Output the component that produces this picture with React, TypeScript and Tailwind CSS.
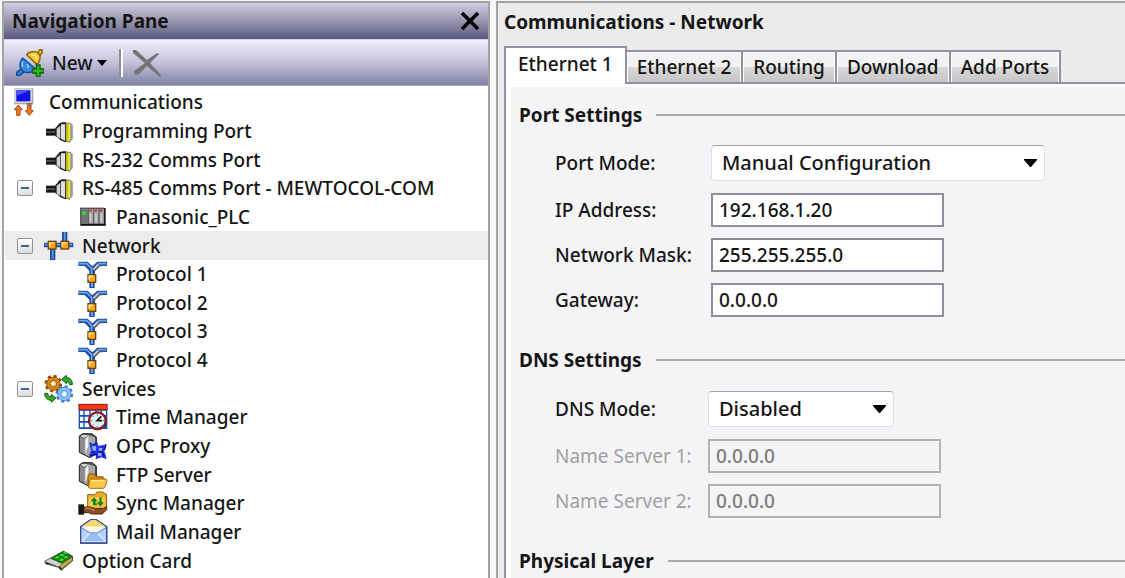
import React from 'react';

type IconProps = { children: React.ReactNode };

/* Tree icons share one 30x28 box, drawn at three units per pixel. */
function TreeIcon({ children }: IconProps) {
  return (
    <svg viewBox="0 0 90 84" className="h-7 w-[30px] shrink-0" aria-hidden="true">
      {children}
    </svg>
  );
}

function CommunicationsIcon() {
  return (
    <svg viewBox="0 0 66 84" className="h-7 w-[22px] shrink-0" aria-hidden="true">
      <rect x="3" y="1" width="58" height="48" fill="#a9a9a9" />
      <rect x="3" y="1" width="54" height="44" fill="#d2d2ce" />
      <rect x="10" y="7" width="42" height="33" fill="#1212e8" />
      <path d="M10 7h42L10 24z" fill="#4a52f8" />
      <path d="M40 45h18v5H40z" fill="#777" />
      <path d="M16 51 28 65h-7v17H11V65H4z" fill="#f47b20" stroke="#a9480b" strokeWidth="3" />
      <path d="M49 82 37 68h7V51h10v17h7z" fill="#f47b20" stroke="#a9480b" strokeWidth="3" />
    </svg>
  );
}

function PortIcon() {
  return (
    <TreeIcon>
      <rect x="6" y="35" width="30" height="21" fill="#161616" />
      <path d="M6 45h28" stroke="#666" strokeWidth="4" />
      <path d="M34 33 40 27 46 19 56 16h10l4 3v54l-6 3-16-7-8-8-6-3z" fill="#1e1e1e" />
      <path d="M38 35 49 26v40l-11-8z" fill="#d9d0d0" />
      <path d="M51 22h12v49l-12-6z" fill="#e6dede" />
      <path d="M65 17h14l7 8v41l-10 12-11-7z" fill="#8b8b80" />
      <path d="M67 21h7v51h-7z" fill="#c9c900" />
      <path d="M73 21h6v50h-6z" fill="#f3ef3a" />
      <path d="M80 23h5v44h-5z" fill="#9b9ba5" />
    </TreeIcon>
  );
}

function PlcIcon() {
  return (
    <TreeIcon>
      <rect x="7" y="15" width="76" height="53" fill="#1b1b1b" />
      <rect x="7" y="14" width="71" height="50" fill="#888" />
      <path d="M7 16h71M9 15v48" stroke="#555" strokeWidth="4" />
      <rect x="11" y="20" width="18" height="40" fill="#747474" />
      <rect x="13" y="26" width="10" height="10" fill="#23f02b" />
      {[32, 48, 64].map((x) => (
        <g key={x}>
          <rect x={x} y="18" width="12" height="44" fill="#aaa" />
          <path d={`M${x + 6} 32v24`} stroke="#ccc" strokeWidth="5" />
          <path d={`M${x - 1} 17v46`} stroke="#5c5c5c" strokeWidth="3" />
          <rect x={x + 2} y="19" width="7" height="7" fill="#d62f2f" />
        </g>
      ))}
      <path d="M8 65h75" stroke="#111" strokeWidth="5" />
    </TreeIcon>
  );
}

function Joint({ x, y }: { x: number; y: number }) {
  return (
    <g>
      <rect x={x + 2} y={y + 2} width="23" height="23" fill="#f7a81c" stroke="#70400a" strokeWidth="4" />
      <path d={`M${x + 6} ${y + 18}V${y + 7}h11`} stroke="#ffe28b" strokeWidth="5" fill="none" />
    </g>
  );
}

function NetworkIcon() {
  return (
    <TreeIcon>
      <path d="M54 0h16v32H54zM0 32h88v14H0zM18 46h16v38H18z" fill="#1b4da6" />
      <path d="M62 0v38M3 38h82M26 48v33" stroke="#5d99e4" strokeWidth="5" />
      <Joint x={11} y={26} />
      <Joint x={49} y={26} />
    </TreeIcon>
  );
}

function ProtocolIcon() {
  return (
    <TreeIcon>
      <path d="M1 5h28l14 14L58 5h29v13H66L51 33v13H34V32L20 18H1z" fill="#1c4ea8" />
      <path d="M43 30 60 14h17l-4 5h-8L50 33z" fill="#565656" />
      <path d="M3 11h23l15 15v17M60 11h25" stroke="#6ba5ec" strokeWidth="5" fill="none" />
      <path d="M46 28 61 13" stroke="#c8c8c8" strokeWidth="6" />
      <rect x="34" y="67" width="16" height="17" fill="#1c4ea8" />
      <path d="M42 69v12" stroke="#6aa5ee" strokeWidth="6" />
      <Joint x={28} y={42} />
    </TreeIcon>
  );
}

function ServicesIcon() {
  return (
    <TreeIcon>
      <circle cx="28" cy="26" r="22" fill="none" stroke="#8b4d08" strokeWidth="9" strokeDasharray="9 8.3" />
      <circle cx="28" cy="26" r="20" fill="#d98714" stroke="#925207" strokeWidth="3" />
      <circle cx="28" cy="26" r="10" fill="#f7c677" stroke="#a15c0a" strokeWidth="3" />
      <circle cx="28" cy="26" r="5" fill="#fff" />
      <circle cx="61" cy="57" r="22" fill="none" stroke="#3a7ed2" strokeWidth="9" strokeDasharray="9 8.3" />
      <circle cx="61" cy="57" r="20" fill="#8fc6ff" stroke="#3f86d8" strokeWidth="3" />
      <circle cx="61" cy="57" r="11" fill="#b9dcff" stroke="#5191d8" strokeWidth="3" />
      <circle cx="61" cy="57" r="5" fill="#fff" />
      <path d="M53 13 67 1v7c12 0 18 7 18 21h-9c0-6-3-9-9-9v6z" fill="#35a525" stroke="#11600d" strokeWidth="3" />
      <path d="M36 69 22 82v-6C9 76 2 68 2 55h9c0 7 4 10 11 10v-7z" fill="#35a525" stroke="#11600d" strokeWidth="3" />
    </TreeIcon>
  );
}

function TimeIcon() {
  return (
    <TreeIcon>
      <rect x="2" y="3" width="86" height="75" fill="#174db7" />
      <path d="M6 23h10v13H6zM20 23h14v13H20zM38 23h14v13H38zM56 23h12v13H56zM72 23h12v13H72zM6 41h10v13H6zM20 41h14v13H20zM6 59h10v14H6zM20 59h14v14H20z" fill="#f4f8ff" />
      <rect x="3" y="4" width="84" height="16" fill="#f13b1b" stroke="#a31c0b" strokeWidth="3" />
      <circle cx="58" cy="53" r="25" fill="#def1f4" stroke="#8e1719" strokeWidth="7" />
      <path d="M58 34v4M58 69v4M38 53h5M74 53h5M44 39l3 3M72 67l3 3M44 67l3-3" stroke="#477c85" strokeWidth="3" />
      <path d="M70 40 57 53h15" stroke="#111" strokeWidth="5" fill="none" />
    </TreeIcon>
  );
}

function ServerShape() {
  return (
    <g>
      <path d="M4 12 14 5h28l13 10v51L35 77 4 61z" fill="#555" stroke="#252525" strokeWidth="3" strokeLinejoin="round" />
      <path d="M6 14 19 20v46L6 59z" fill="#8b8b8b" />
      <path d="M19 22 29 9l22 7v47L34 74l-15-7z" fill="#a9a9a9" />
      <path d="M12 9h17l-9 9-12-5z" fill="#d8d8d8" />
      <path d="M22 24 31 12v30L22 64z" fill="#f2f2f2" />
    </g>
  );
}

function OpcIcon() {
  return (
    <TreeIcon>
      <ServerShape />
      <path d="M34 31l12 6 11-8 3 12 14 0 12-6-3 15-5 9 8 22-15-6-18 7 1-12-20 4 6-16z" fill="#0d1590" />
      <path d="M42 42h13v14H42zM61 47h12v9H61zM58 63h13v10H58z" fill="#8fb0ff" />
      <path d="M38 36l8 5 11-4-1 16 7 5-13 3-14 6 6-13zM62 44l17-3-5 15 6 8 2 14-12-5-13 3 2-13z" stroke="#2a35ff" strokeWidth="4" fill="none" />
    </TreeIcon>
  );
}

function FtpIcon() {
  return (
    <TreeIcon>
      <ServerShape />
      <path d="M30 44q0-5 5-5h14l6 8h18q5 0 5 6v26H36q-6 0-6-6z" fill="#d98f0c" stroke="#8f5905" strokeWidth="3" />
      <path d="M38 54h43q6 0 6 6l-5 16q-2 6-7 6H37q-6 0-5-7l3-16q1-5 3-5z" fill="#fbc748" stroke="#a96b0a" strokeWidth="3" />
      <path d="M39 59h40" stroke="#fff0a8" strokeWidth="3" />
    </TreeIcon>
  );
}

function SyncIcon() {
  return (
    <TreeIcon>
      <path d="M29 17h22l6-8h19l5 6h4l1 11v25L75 62H29z" fill="#e9ac28" stroke="#965f0c" strokeWidth="3" />
      <path d="M32 24h50v30H32z" fill="#fbc850" />
      <path d="M48 25 38 37h7v12h12v-6h-4v-6h6zM64 25h7v15h7L67 53 56 40h8z" fill="#16871d" />
      <path d="M1 46h17v31H1z" fill="#161616" />
      <path d="M18 54h20l14 5h24l10-7v10l-13 13H41l-9-4H18z" fill="#8e4d2a" stroke="#4e2612" strokeWidth="3" />
      <path d="M21 58h16l12 6" stroke="#c9895a" strokeWidth="4" fill="none" />
    </TreeIcon>
  );
}

function MailIcon() {
  return (
    <TreeIcon>
      <path d="M8 26 38 5h17l31 21v49H8z" fill="#edf4ff" stroke="#3b4b92" strokeWidth="4" />
      <path d="M14 24 42 6h10l28 18-8 7H22z" fill="#f6d56a" />
      <path d="M14 25h66l-18 10H32z" fill="#fff9e0" />
      <path d="M10 29 34 46h25l25-17v43H10z" fill="#b5d4fb" />
      <path d="M10 72 36 45h22l26 27z" fill="#94c0f7" stroke="#dce9fb" strokeWidth="4" />
      <path d="M10 29l26 16h22l26-16" stroke="#5b78b6" strokeWidth="3" fill="none" />
      <path d="M8 27v48h78V27" fill="none" stroke="#3b4b92" strokeWidth="4" />
    </TreeIcon>
  );
}

function OptionCardIcon() {
  return (
    <TreeIcon>
      <path d="M1 42 58 11 87 27v14L52 71 43 62 4 51z" fill="#4b4b4b" />
      <path d="M3 43 19 35l34 14-9 10z" fill="#d3d3d3" />
      <path d="M45 57 84 31v9L52 66z" fill="#b8b430" />
      <path d="M20 33 58 12l27 15-37 22z" fill="#127a19" />
      <path d="M31 32l8-5 9 4-8 5zM45 25l8-5 9 4-8 5zM44 39l8-5 9 4-8 5zM58 31l8-5 8 4-8 5zM57 17l5-2 8 4-5 3z" fill="#36e32b" />
      <path d="M6 50h7M46 58l6 11" stroke="#191919" strokeWidth="4" />
    </TreeIcon>
  );
}

function NewIcon() {
  return (
    <svg viewBox="0 0 84 84" className="size-7 shrink-0" aria-hidden="true">
      <path d="M62 17 70 3l8-1 1 8-10 14" fill="#f5b91d" stroke="#8c5900" strokeWidth="4" strokeLinejoin="round" />
      <path d="M32 17q5-8 15-8 12-3 20 4 8 8 4 20-1 9-9 13z" fill="#fcc52a" stroke="#8c5900" strokeWidth="4" strokeLinejoin="round" />
      <path d="M46 18q9-2 13 3t2 11" fill="none" stroke="#fff0a0" strokeWidth="5" />
      <path d="M16 59 2 70v9h10l13-11" fill="#2e7fd8" stroke="#124a94" strokeWidth="4" strokeLinejoin="round" />
      <path d="M20 27 56 58q-2 10-14 12-14 3-22-4-9-8-8-19 1-12 8-20z" fill="#3588e0" stroke="#124a94" strokeWidth="4" strokeLinejoin="round" />
      <path d="M20 37q-5 9 1 17M34 46q5 7 0 11" fill="none" stroke="#8fc8fb" strokeWidth="5" />
      <path d="M61 48h11v12h12v12H72v12H61V72H49V60h12z" fill="#35b51c" stroke="#08660b" strokeWidth="4" />
    </svg>
  );
}

function DownArrow() {
  return (
    <svg viewBox="0 0 13 8" className="h-2 w-[13px]" aria-hidden="true">
      <path d="M0 0h13v1L7 8H6L0 1z" fill="#000" />
    </svg>
  );
}

type Node = { label: string; icon: React.ReactNode; level: 0 | 1 | 2; open?: boolean; selected?: boolean };

const nodes: Node[] = [
  { label: 'Communications', icon: <CommunicationsIcon />, level: 0 },
  { label: 'Programming Port', icon: <PortIcon />, level: 1 },
  { label: 'RS-232 Comms Port', icon: <PortIcon />, level: 1 },
  { label: 'RS-485 Comms Port - MEWTOCOL-COM', icon: <PortIcon />, level: 1, open: true },
  { label: 'Panasonic_PLC', icon: <PlcIcon />, level: 2 },
  { label: 'Network', icon: <NetworkIcon />, level: 1, open: true, selected: true },
  { label: 'Protocol 1', icon: <ProtocolIcon />, level: 2 },
  { label: 'Protocol 2', icon: <ProtocolIcon />, level: 2 },
  { label: 'Protocol 3', icon: <ProtocolIcon />, level: 2 },
  { label: 'Protocol 4', icon: <ProtocolIcon />, level: 2 },
  { label: 'Services', icon: <ServicesIcon />, level: 1, open: true },
  { label: 'Time Manager', icon: <TimeIcon />, level: 2 },
  { label: 'OPC Proxy', icon: <OpcIcon />, level: 2 },
  { label: 'FTP Server', icon: <FtpIcon />, level: 2 },
  { label: 'Sync Manager', icon: <SyncIcon />, level: 2 },
  { label: 'Mail Manager', icon: <MailIcon />, level: 2 },
  { label: 'Option Card', icon: <OptionCardIcon />, level: 1 },
];

const indent = { 0: 'pl-2', 1: 'pl-3', 2: 'pl-[73px]' };
const labelGap = { 0: 'ml-3.5', 1: 'ml-2', 2: 'ml-2' };

function TreeRow({ node }: { node: Node }) {
  return (
    <li
      role="treeitem"
      aria-level={node.level + 1}
      aria-selected={!!node.selected}
      aria-expanded={node.open}
      className={`flex items-center ${indent[node.level]} ${node.selected ? 'bg-[#ececec]' : ''}`}
    >
      {node.level === 1 && (
        <span className="flex w-[27px] shrink-0">
          {node.open && (
            <button
              aria-label={`Collapse ${node.label}`}
              className="flex size-4 items-center justify-center rounded-xs border border-[#929292] bg-linear-to-b from-white to-[#dcdcdc]"
            >
              <span className="h-0.5 w-2 bg-[#4a5e9c]" />
            </button>
          )}
        </span>
      )}
      {node.icon}
      <span className={`whitespace-nowrap ${labelGap[node.level]}`}>{node.label}</span>
    </li>
  );
}

function NavigationPane() {
  return (
    <aside className="flex w-[488px] shrink-0 flex-col border-2 border-b-0 border-[#a3a3a3] bg-white">
      <header className="flex h-9 shrink-0 items-center justify-between bg-linear-to-b from-[#cfcde2] via-[#9896ad] to-[#5c5980] pr-1.5 pl-2">
        <h2 className="font-bold">Navigation Pane</h2>
        <button aria-label="Close" className="flex size-6 items-center justify-center">
          <svg viewBox="0 0 20 20" className="size-5" aria-hidden="true">
            <path d="M2 2 18 18M18 2 2 18" stroke="#000" strokeWidth="3.6" />
          </svg>
        </button>
      </header>
      <div className="flex h-[47px] shrink-0 items-center border-y border-t-[#d9d7ea] border-b-[#a9a7c3] bg-linear-to-b from-[#f0effa] via-[#c4c2da] to-[#8381a6] pl-3">
        <button className="flex items-center">
          <NewIcon />
          <span className="ml-2">New</span>
          <svg viewBox="0 0 10 6" className="ml-1 h-1.5 w-2.5" aria-hidden="true">
            <path d="M0 0h10L5 6z" fill="#000" />
          </svg>
        </button>
        <span className="ml-3 h-7 w-1 border-l-2 border-[#8f8da8] bg-white" />
        <button aria-label="Delete" className="ml-2.5">
          <svg viewBox="0 0 28 28" className="size-7" aria-hidden="true">
            <path d="M0 1 3 1 14 11 24 4 26 5 17 14 28 26 27 28 14 17 6 25 2 26 1 22 12 14 0 4z" fill="#747474" />
          </svg>
        </button>
      </div>
      <ul role="tree" aria-label="Navigation" className="grid flex-1 auto-rows-[minmax(28px,1fr)] pt-0.5 pb-[3px] pl-px">
        {nodes.map((node) => (
          <TreeRow key={node.label} node={node} />
        ))}
      </ul>
    </aside>
  );
}

const tabs = ['Ethernet 1', 'Ethernet 2', 'Routing', 'Download', 'Add Ports'];

function Tabs() {
  return (
    <div role="tablist" className="relative z-10 -mb-0.5 flex items-end">
      {tabs.map((tab, i) =>
        i === 0 ? (
          <button
            key={tab}
            role="tab"
            aria-selected="true"
            className="h-[38px] border-2 border-b-0 border-[#8f919c] bg-white px-3 pb-1 whitespace-nowrap"
          >
            {tab}
          </button>
        ) : (
          <button
            key={tab}
            role="tab"
            aria-selected="false"
            className="h-[34px] border-2 border-l-0 border-[#8f919c] bg-linear-to-b from-[#f2f2f2] from-50% via-[#d9d9d9] via-50% to-[#c5c5c5] px-2.5 whitespace-nowrap shadow-[inset_1px_1px_0_#fff,inset_-1px_0_0_#fff]"
          >
            {tab}
          </button>
        ),
      )}
    </div>
  );
}

function GroupHeading({ children }: { children: React.ReactNode }) {
  return (
    <div className="flex h-6 items-center gap-3.5 pl-2">
      <h3 className="font-bold whitespace-nowrap">{children}</h3>
      <span className="h-0.5 flex-1 bg-[#aaaaaa]" />
    </div>
  );
}

function SelectField({ id, label, options, width, labelWidth }: { id: string; label: string; options: string[]; width: string; labelWidth: string }) {
  return (
    <div className="mb-px flex items-center">
      <label htmlFor={id} className={`shrink-0 ${labelWidth}`}>
        {label}
      </label>
      <div className={`relative ${width}`}>
        <select
          id={id}
          className="h-9 w-full appearance-none rounded-sm border border-[#dcdfe8] border-t-[#a0a2aa] bg-white pl-2.5 text-[20px]"
        >
          {options.map((o) => (
            <option key={o}>{o}</option>
          ))}
        </select>
        <span className="pointer-events-none absolute inset-y-0 right-2 flex items-center">
          <DownArrow />
        </span>
      </div>
    </div>
  );
}

function TextField({ id, label, value, labelWidth, disabled }: { id: string; label: string; value: string; labelWidth: string; disabled?: boolean }) {
  return (
    <div className="flex items-center">
      <label htmlFor={id} className={`shrink-0 whitespace-nowrap ${labelWidth} ${disabled ? 'font-normal text-[#a0a0a0]' : ''}`}>
        {label}
      </label>
      <input
        id={id}
        type="text"
        defaultValue={value}
        disabled={disabled}
        className="h-[34px] w-[233px] border-2 border-[#8c8f98] bg-white px-1.5 disabled:border-[#b2b2b2] disabled:bg-[#f4f4f6] disabled:text-[#7c7c7c]"
      />
    </div>
  );
}

function SettingsPane() {
  return (
    <main className="flex min-w-0 flex-1 flex-col border-t-2 border-l-2 border-[#a3a3a3] bg-[#ebebeb] pl-1.5">
      <h1 className="flex h-[43px] shrink-0 items-center pb-1.5 font-bold">Communications - Network</h1>
      <Tabs />
      <section role="tabpanel" className="flex-1 border-t-2 border-l-2 border-[#8f919c] bg-white pt-[3px] pl-[5px]">
        <div className="flex h-full flex-col gap-[31px] bg-[#f4f4f6] pt-4">
          <div className="flex flex-col gap-[18px]">
            <GroupHeading>Port Settings</GroupHeading>
            <div className="flex flex-col gap-[11px] pl-11">
              <SelectField id="port-mode" label="Port Mode:" options={['Manual Configuration']} width="w-[334px]" labelWidth="w-[156px]" />
              <TextField id="ip" label="IP Address:" value="192.168.1.20" labelWidth="w-[156px]" />
              <TextField id="mask" label="Network Mask:" value="255.255.255.0" labelWidth="w-[156px]" />
              <TextField id="gateway" label="Gateway:" value="0.0.0.0" labelWidth="w-[156px]" />
            </div>
          </div>
          <div className="flex flex-col gap-[19px]">
            <GroupHeading>DNS Settings</GroupHeading>
            <div className="flex flex-col gap-[11px] pl-11">
              <SelectField id="dns-mode" label="DNS Mode:" options={['Disabled']} width="w-[186px]" labelWidth="w-[153px]" />
              <TextField id="ns1" label="Name Server 1:" value="0.0.0.0" labelWidth="w-[153px]" disabled />
              <TextField id="ns2" label="Name Server 2:" value="0.0.0.0" labelWidth="w-[153px]" disabled />
            </div>
          </div>
          <GroupHeading>Physical Layer</GroupHeading>
        </div>
      </section>
    </main>
  );
}

export default function App() {
  return (
    <div className="flex min-h-screen gap-1.5 bg-[#f7f7f7] pt-px pl-0.5 font-['Noto_Sans','Open_Sans',sans-serif] text-[19px] leading-6 font-medium text-[#151515]">
      <NavigationPane />
      <SettingsPane />
    </div>
  );
}
